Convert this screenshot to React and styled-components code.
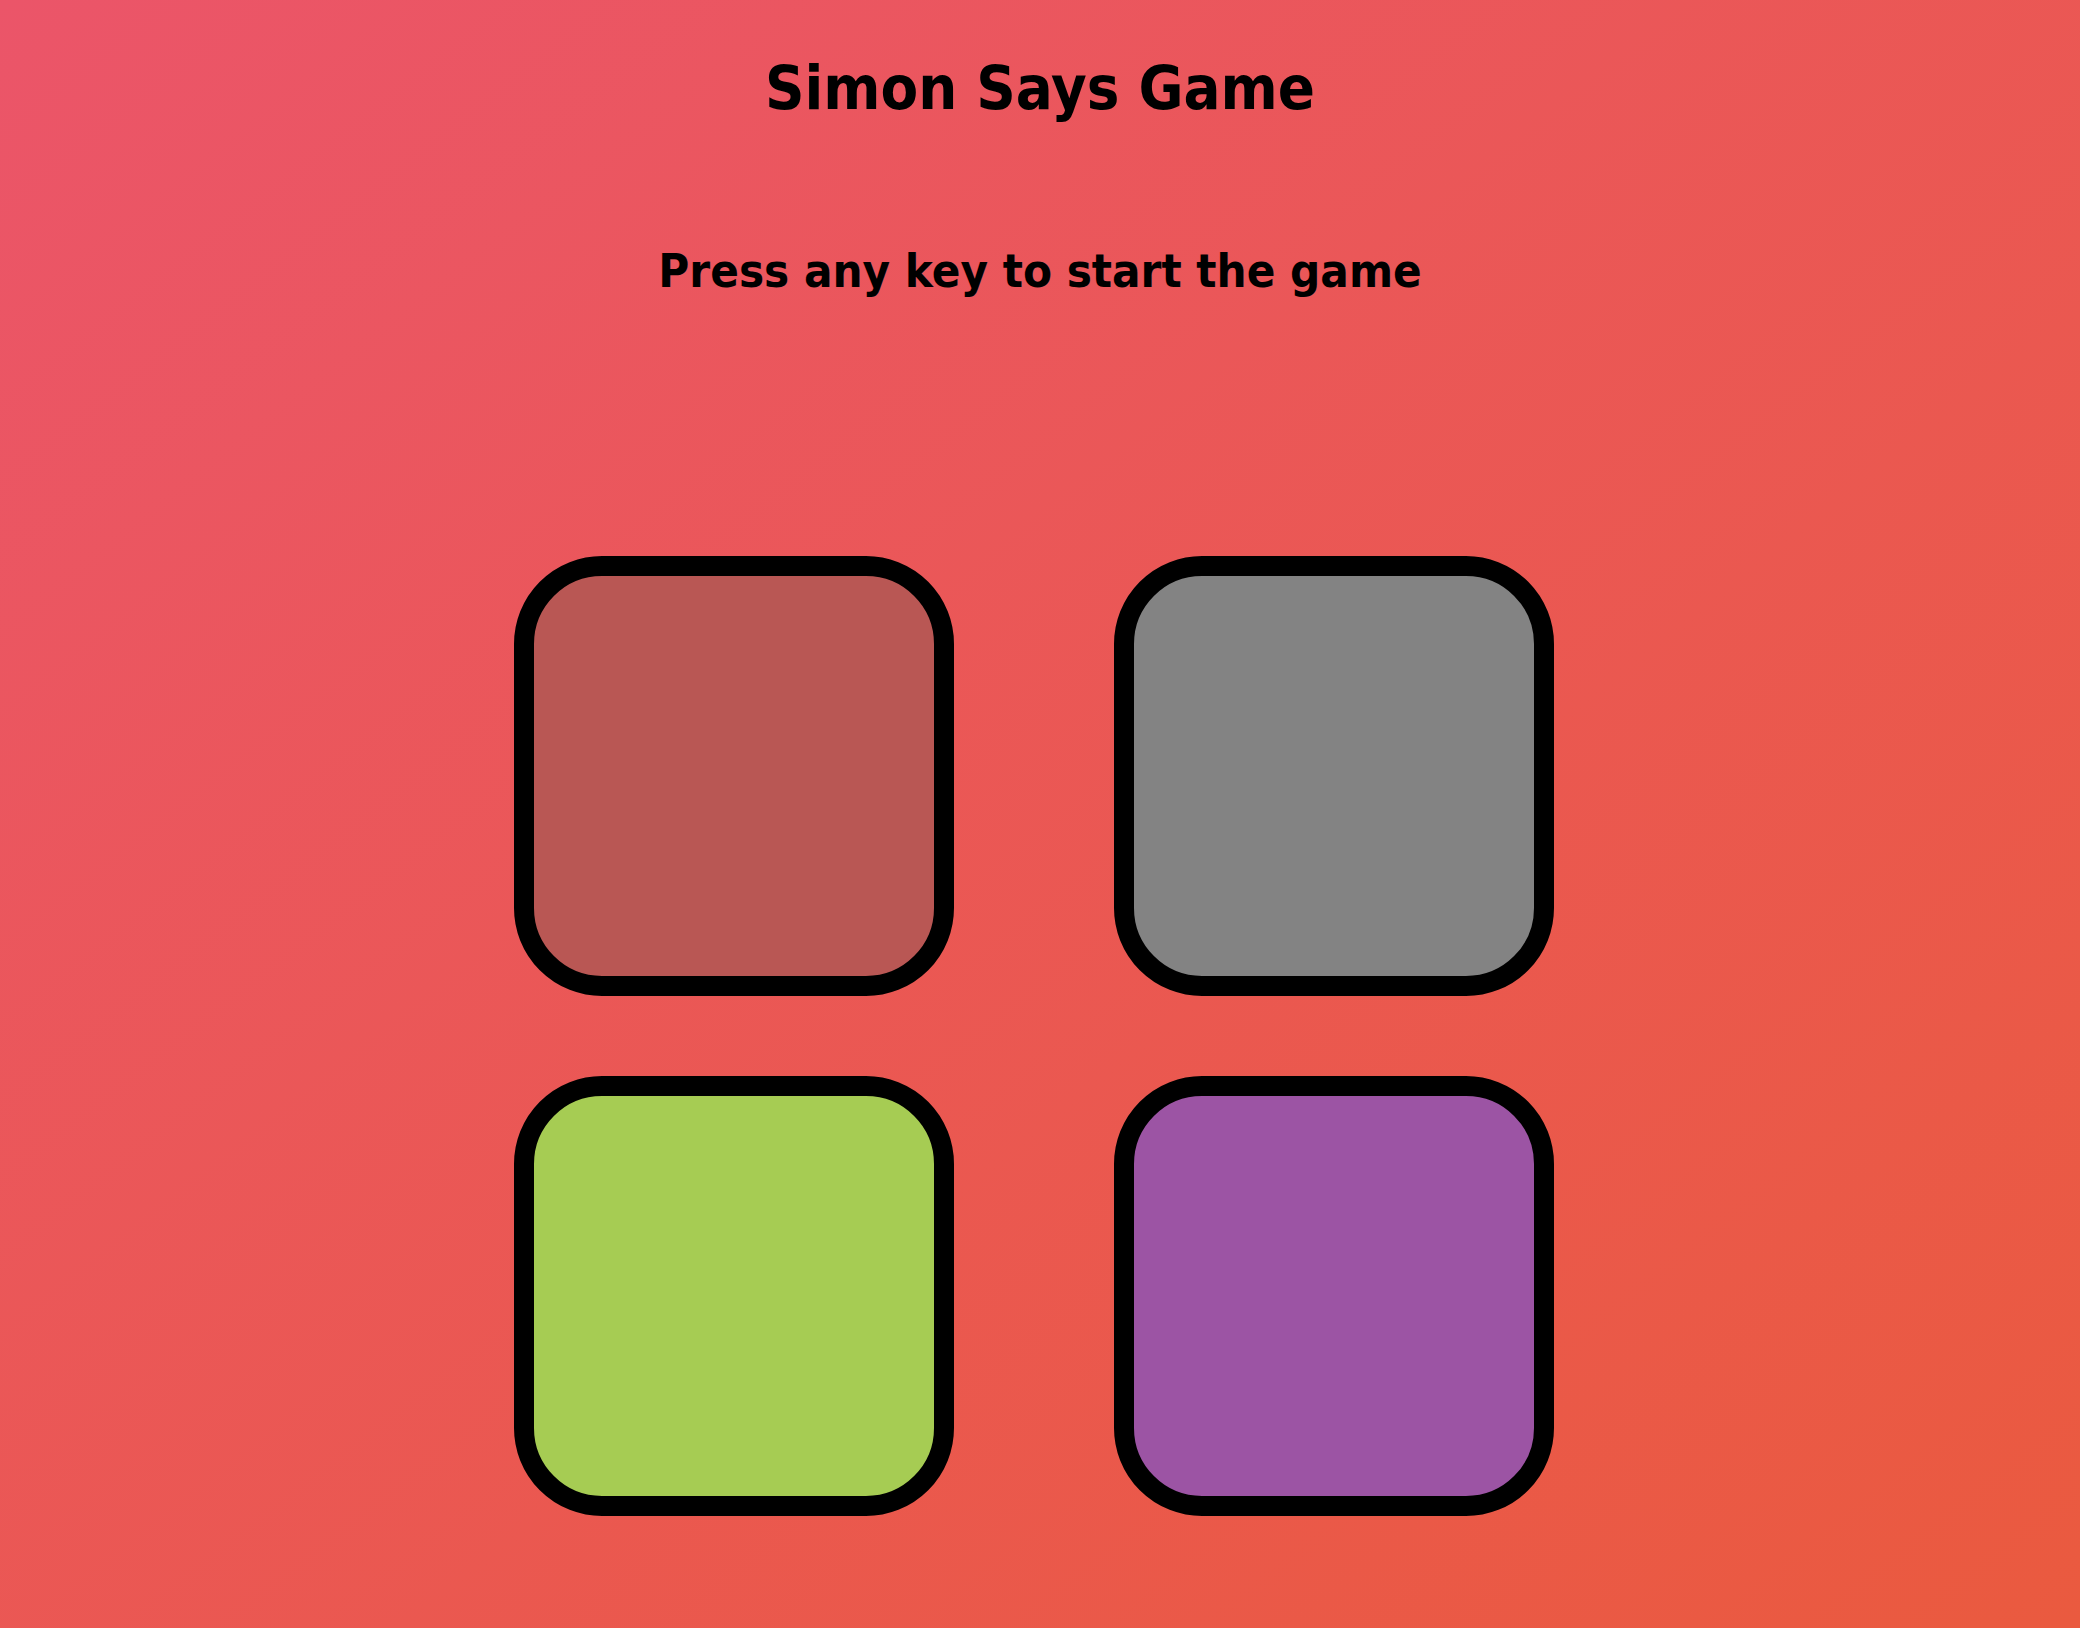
import React from 'react';
import styled, { createGlobalStyle } from 'styled-components';

const GlobalStyle = createGlobalStyle`
  html, body {
    margin: 0;
    padding: 0;
  }
  body {
    min-height: 100vh;
    background: linear-gradient(to bottom right, #eb5569, #ea5a3f);
    font-family: "Comic Sans MS", "Liberation Sans Narrow", "DejaVu Sans Condensed", sans-serif;
    color: #000;
  }
`;

const Page = styled.main`
  min-height: 100vh;
  display: flex;
  flex-direction: column;
  align-items: center;
  padding-top: 52px;
  box-sizing: border-box;
`;

const Title = styled.h1`
  margin: 0;
  font-size: 61px;
  line-height: 72px;
  font-weight: 700;
`;

const Status = styled.h3`
  margin: 119px 0 0;
  font-size: 47px;
  line-height: 56px;
  font-weight: 700;
`;

const Board = styled.div`
  display: grid;
  grid-template-columns: repeat(2, 440px);
  column-gap: 160px;
  row-gap: 80px;
  margin-top: 257px;
  padding-right: 12px;
`;

const Pad = styled.div`
  width: 440px;
  height: 440px;
  box-sizing: border-box;
  border: 20px solid #000;
  border-radius: 20%;
  background: ${(p) => p.$color};
  cursor: pointer;
`;

const pads = [
  { id: 'red', color: '#b95754' },
  { id: 'grey', color: '#838383' },
  { id: 'green', color: '#a6cc53' },
  { id: 'purple', color: '#9c54a4' },
];

const App = () => {
  const [level, setLevel] = React.useState(0);
  //start on any key
  React.useEffect(() => {
    const onKey = () => { if (level === 0) setLevel(1); };
    window.addEventListener('keydown', onKey);
    return () => window.removeEventListener('keydown', onKey);
  }, [level]);

  return (
    <>
      <GlobalStyle />
      <Page>
        <Title>Simon Says Game</Title>
        <Status>{level === 0 ? 'Press any key to start the game' : `Level ${level}`}</Status>
        <Board>
          {pads.map((p) => (
            <Pad key={p.id} id={p.id} $color={p.color} />
          ))}
        </Board>
      </Page>
    </>
  );
};

export default App;
